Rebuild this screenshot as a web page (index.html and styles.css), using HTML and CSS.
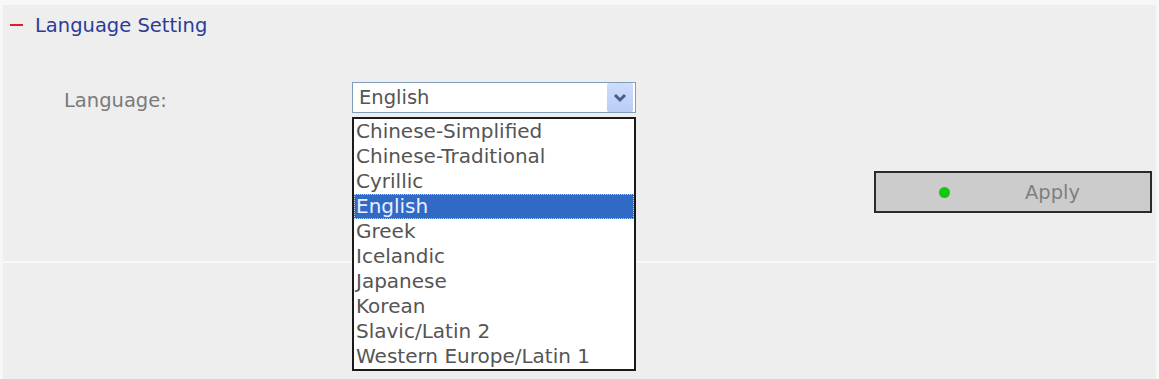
FILE: index.html
```html
<!DOCTYPE html>
<html lang="en">
<head>
  <meta charset="UTF-8">
  <title>Language Setting</title>
  <link rel="stylesheet" href="styles.css">
</head>
<body>
  <div class="panel">
    <div class="panel-title"><span class="toggle"></span>Language Setting</div>

    <div class="setting-row">
      <div class="field-label">Language:</div>

      <div class="combo">
        <div class="combo-box">
          <span class="combo-value">English</span>
          <span class="combo-arrow">
            <svg width="14" height="10" viewBox="0 0 14 10">
              <path d="M2 2 L7 7 L12 2" fill="none" stroke="#4b5d86" stroke-width="3"/>
            </svg>
          </span>
        </div>
        <ul class="combo-list">
          <li>Chinese-Simplified</li>
          <li>Chinese-Traditional</li>
          <li>Cyrillic</li>
          <li class="selected">English</li>
          <li>Greek</li>
          <li>Icelandic</li>
          <li>Japanese</li>
          <li>Korean</li>
          <li>Slavic/Latin 2</li>
          <li>Western Europe/Latin 1</li>
        </ul>
      </div>

      <div class="actions">
        <button class="apply-btn" type="button"><span class="dot"></span><span class="apply-text">Apply</span></button>
      </div>
    </div>

    <div class="panel-foot"></div>
  </div>
</body>
</html>
```

FILE: styles.css
```css
* {
  margin: 0;
  padding: 0;
  box-sizing: border-box;
}

body {
  font-family: "DejaVu Sans", Verdana, sans-serif;
  font-size: 19.5px;
  background-color: #f7f7f7;
  color: #666;
  overflow: hidden;
}

.panel {
  margin: 5px 3px 0 3px;
  background-color: #eeeeee;
  height: calc(100vh - 5px);
}

.panel-title {
  display: flex;
  align-items: center;
  height: 48px;
  padding-left: 7px;
  padding-bottom: 8px;
  color: #2c3c96;
  line-height: 23px;
}

.toggle {
  display: inline-block;
  width: 13px;
  height: 2px;
  background-color: #e02020;
  margin-right: 12px;
}

.setting-row {
  display: grid;
  grid-template-columns: 288px 284px 1fr;
  height: 210px;
  padding: 29px 4px 0 61px;
  border-bottom: 2px solid #f8f8f8;
}

.field-label {
  color: #7a7a7a;
  height: 31px;
  line-height: 31px;
  padding-top: 3px;
}

.combo {
  position: relative;
  height: 31px;
}

.combo-box {
  display: flex;
  align-items: center;
  justify-content: space-between;
  height: 31px;
  background-color: #fff;
  border: 1px solid #7f9db9;
  padding-left: 6px;
  padding-right: 2px;
  color: #555;
}

.combo-arrow {
  display: flex;
  align-items: center;
  justify-content: center;
  width: 26px;
  height: 29px;
  border-radius: 2px;
  background: linear-gradient(#cfdcfb, #b9cdf7);
}

.combo-list {
  position: absolute;
  top: 35px;
  left: 0;
  width: 284px;
  list-style: none;
  background-color: #fff;
  border: 2px solid #1a1a1a;
  z-index: 2;
}

.combo-list li {
  height: 25px;
  line-height: 25px;
  padding-left: 2px;
  font-size: 20px;
  color: #555;
  white-space: nowrap;
}

.combo-list li.selected {
  background-color: #316ac5;
  color: #e8efff;
  outline: 1px dotted #c8d4ee;
  outline-offset: -1px;
}

.actions {
  justify-self: end;
  padding-top: 89px;
}

.apply-btn {
  display: flex;
  align-items: center;
  width: 278px;
  height: 42px;
  background-color: #cccccc;
  border: 2px solid #2a2a2a;
  font-family: inherit;
  font-size: inherit;
  color: #808080;
  padding-left: 63px;
}

.dot {
  width: 11px;
  height: 11px;
  border-radius: 50%;
  background-color: #10c810;
}

.apply-text {
  margin-left: 75px;
}
```
